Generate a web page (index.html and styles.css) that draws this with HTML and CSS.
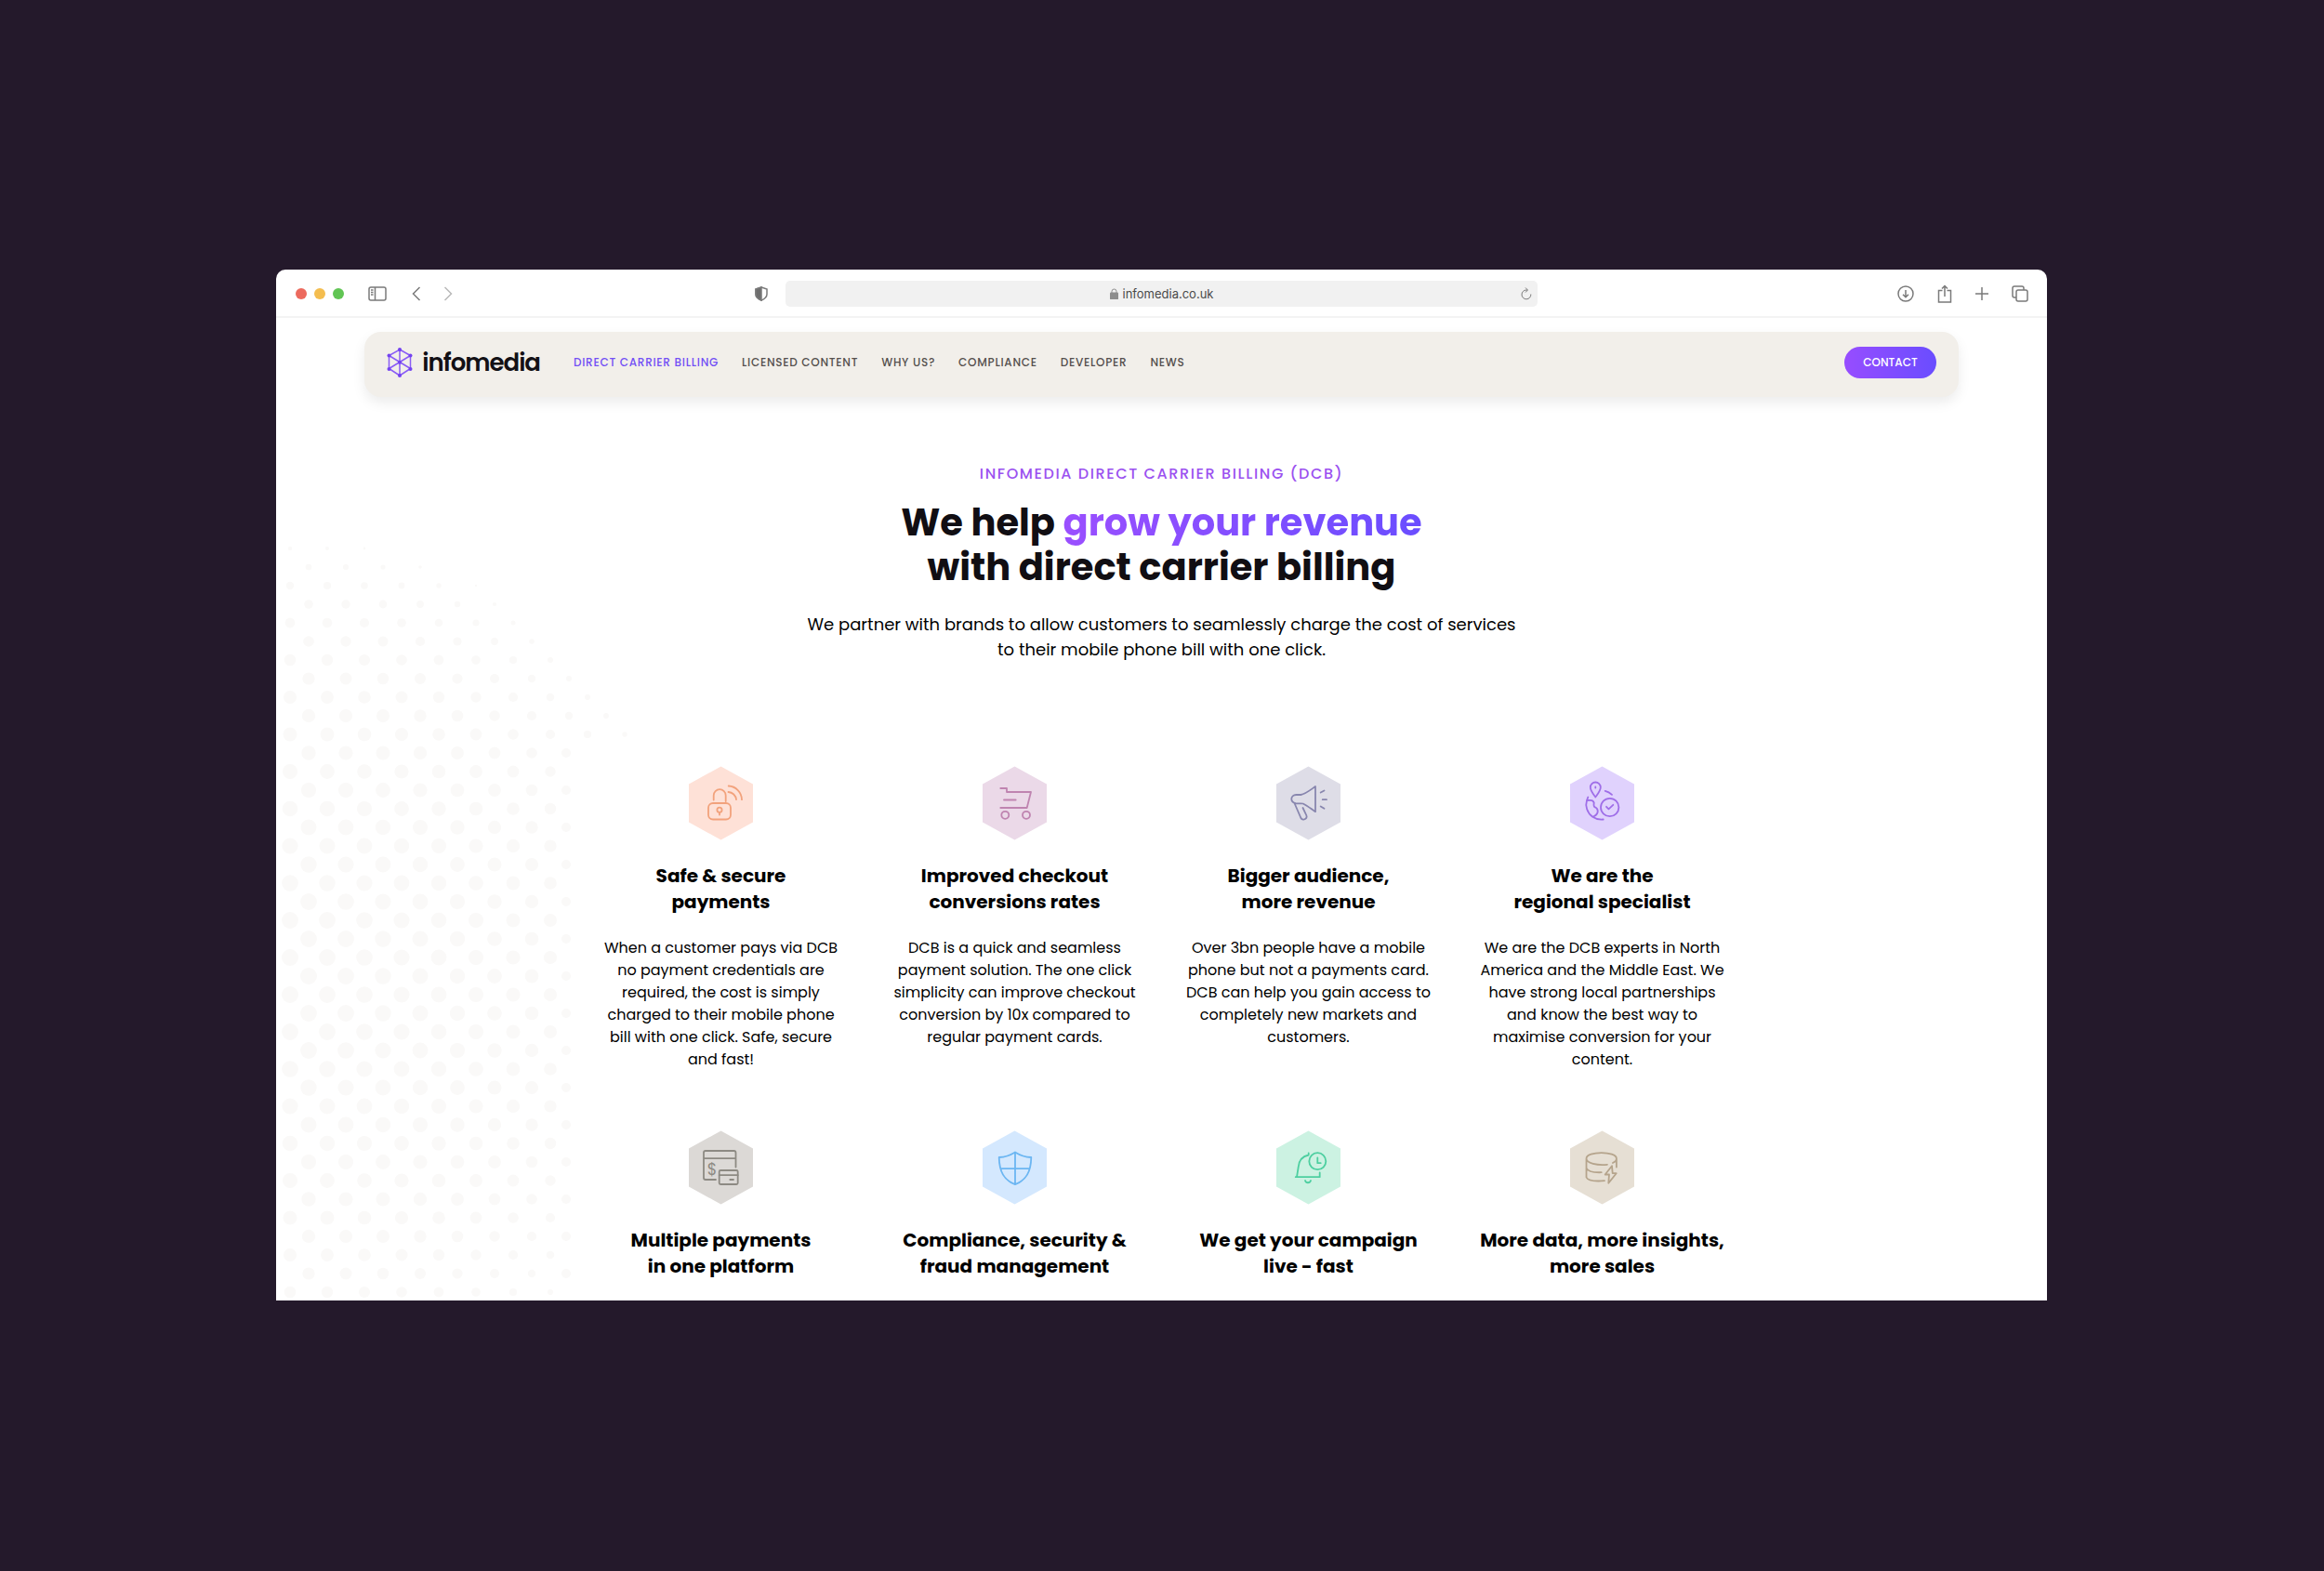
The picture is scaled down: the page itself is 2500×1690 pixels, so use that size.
FILE: index.html
```html
<!DOCTYPE html>
<html lang="en">
<head>
<meta charset="utf-8">
<meta name="viewport" content="width=device-width, initial-scale=1">
<title>Infomedia – Direct Carrier Billing</title>
<link rel="stylesheet" href="styles.css">
</head>
<body>
<div class="window">
  <div class="toolbar">
    <div class="toolbar-side">
      <div class="lights"><span class="light red"></span><span class="light amber"></span><span class="light green"></span></div>
      <button class="tool sidebar" aria-label="Sidebar"><svg width="20" height="16" viewBox="0 0 20 16"><rect x="1" y="1" width="18" height="14" rx="2"/><path d="M7.500 1v14M3 4h2.500M3 6.500h2.500M3 9h2.500"/></svg></button>
      <button class="tool" aria-label="Back"><svg width="10" height="16" viewBox="0 0 10 16"><path d="M8.500 1 1.500 8l7 7"/></svg></button>
      <button class="tool forward" aria-label="Forward"><svg width="10" height="16" viewBox="0 0 10 16"><path d="M1.500 1l7 7-7 7"/></svg></button>
      <button class="tool shield" aria-label="Privacy report"><svg width="14" height="16" viewBox="0 0 14 16"><path d="M7 1 13 3v5.500c0 3-2.500 5-6 6.700-3.500-1.700-6-3.700-6-6.700V3z"/><path class="solid" d="M7 1 1 3v5.500c0 3 2.500 5 6 6.700z"/></svg></button>
    </div>
    <form class="address">
      <svg class="lock" width="9" height="12" viewBox="0 0 9 12"><rect x="0" y="5" width="9" height="7" rx="1"/><path d="M2 6V3.500a2.500 2.500 0 0 1 5 0V6"/></svg>
      <input class="url" type="text" aria-label="Address" value="infomedia.co.uk">
      <button class="tool reload" type="button" aria-label="Reload"><svg width="12" height="14" viewBox="0 0 12 14"><path d="M10.800 7.500A4.900 4.900 0 1 1 6 3h1M5 .500 7.500 3 5 5.500"/></svg></button>
    </form>
    <div class="toolbar-side end">
      <button class="tool" aria-label="Downloads"><svg width="18" height="18" viewBox="0 0 18 18"><circle cx="9" cy="9" r="8"/><path d="M9 5v7.500M6 9.700l3 3 3-3"/></svg></button>
      <button class="tool" aria-label="Share"><svg width="16" height="20" viewBox="0 0 16 20"><path d="M5.500 6.500h-4V19h13V6.500h-4M8 13V1.500M5 4.500l3-3 3 3"/></svg></button>
      <button class="tool" aria-label="New tab"><svg width="14" height="14" viewBox="0 0 14 14"><path d="M7 0v14M0 7h14"/></svg></button>
      <button class="tool" aria-label="Tabs"><svg width="18" height="18" viewBox="0 0 18 18"><rect x="5" y="5" width="12" height="12" rx="2"/><path d="M5 13H3a2 2 0 0 1-2-2V3a2 2 0 0 1 2-2h8a2 2 0 0 1 2 2v2"/></svg></button>
    </div>
  </div>

  <div class="page">
    <svg class="halftone" id="halftone" width="400" height="840" viewBox="0 0 400 840" aria-hidden="true"></svg>

    <header class="site-header">
      <a class="brand" href="#">
        <svg width="28" height="34" viewBox="0 0 28 34"><path d="M14 3 25.500 9.500v14L14 31 2.500 23.500v-14zM14 3v28M2.500 9.500l23 14M25.500 9.500l-23 14"/><g><circle cx="14" cy="3" r="2"/><circle cx="25.500" cy="9.500" r="2"/><circle cx="25.500" cy="24" r="2"/><circle cx="14" cy="31" r="2"/><circle cx="2.500" cy="24" r="2"/><circle cx="2.500" cy="9.500" r="2"/><circle cx="14" cy="16.700" r="2"/></g></svg>
        <span>infomedia</span>
      </a>
      <nav class="nav">
        <a class="active" href="#">DIRECT CARRIER BILLING</a>
        <a href="#">LICENSED CONTENT</a>
        <a href="#">WHY US?</a>
        <a href="#">COMPLIANCE</a>
        <a href="#">DEVELOPER</a>
        <a href="#">NEWS</a>
      </nav>
      <button class="contact">CONTACT</button>
    </header>

    <main>
      <section class="hero">
        <p class="eyebrow">INFOMEDIA DIRECT CARRIER BILLING (DCB)</p>
        <h1>We help <em>grow your revenue</em><br>with direct carrier billing</h1>
        <p class="lead">We partner with brands to allow customers to seamlessly charge the cost of services<br>to their mobile phone bill with one click.</p>
      </section>

      <section class="features">
        <article class="feature orange">
          <svg class="badge" viewBox="0 0 69 79"><path class="hex" d="M34.500 0 69 19v41L34.500 79 0 60V19z"/><rect x="21" y="39.500" width="24" height="17.500" rx="5"/><path d="M26.700 36v-4.800a6.500 6.500 0 0 1 13 0V37.500M42.700 21A15 15 0 0 1 57 35.700M42.500 27.500A9 9 0 0 1 51 35.700M33 49.300V52"/><circle cx="33" cy="46.700" r="2.600"/></svg>
          <h2>Safe &amp; secure<br>payments</h2>
          <p>When a customer pays via DCB<br>no payment credentials are<br>required, the cost is simply<br>charged to their mobile phone<br>bill with one click. Safe, secure<br>and fast!</p>
        </article>
        <article class="feature pink">
          <svg class="badge" viewBox="0 0 69 79"><path class="hex" d="M34.500 0 69 19v41L34.500 79 0 60V19z"/><path d="M19.300 23.500H26v4h26l-4.300 17H19.300M23 36h12.700"/><circle cx="24.300" cy="52.300" r="4"/><circle cx="47" cy="52.300" r="4"/></svg>
          <h2>Improved checkout<br>conversions rates</h2>
          <p>DCB is a quick and seamless<br>payment solution. The one click<br>simplicity can improve checkout<br>conversion by 10x compared to<br>regular payment cards.</p>
        </article>
        <article class="feature slate">
          <svg class="badge" viewBox="0 0 69 79"><path class="hex" d="M34.500 0 69 19v41L34.500 79 0 60V19z"/><path d="M42 21.500v27.200c-4.500-3-8.500-6.500-13.300-8.700-2-.6-5.500.2-8-.3-2.800-.8-4.400-2.600-4.400-4.700 0-2.500 2-4.500 5-4.500h5c5-.8 10.700-5.500 15.700-9zM19.700 40 26 54.500c.7 2 2 3 4 2.500 2.300-.6 3.200-2.500 2.300-4.500L28.500 44.500M47.700 28l3.800-2M49.700 35.700H54M47.700 43l3.800 2.300"/></svg>
          <h2>Bigger audience,<br>more revenue</h2>
          <p>Over 3bn people have a mobile<br>phone but not a payments card.<br>DCB can help you gain access to<br>completely new markets and<br>customers.</p>
        </article>
        <article class="feature violet">
          <svg class="badge" viewBox="0 0 69 79"><path class="hex" d="M34.500 0 69 19v41L34.500 79 0 60V19z"/><path d="M27.300 33c-2.500-3.500-5.500-7-5.500-10.500a5.500 5.500 0 0 1 11 0C32.800 26 29.800 29.500 27.300 33zM27.300 22v1M37.700 26.300c3 .8 5.300 2.200 7.300 4M39 43.300l2.500 2.500 4.800-4.500M19.300 33l-1.300 3.500c-2 6 .3 13.500 6.300 17.800 2.500-1 5-3 5.400-5.300.2-2-.2-3.500-1.700-4.500-2-.8-3-1.200-2.300-5.500-.5-2-2-2.700-4.200-2.700-1.500 0-2.500 0-3.500.2M24.300 54.300C27.500 56.500 31 57.500 35.700 57"/><circle cx="42.700" cy="44" r="9.700"/></svg>
          <h2>We are the<br>regional specialist</h2>
          <p>We are the DCB experts in North<br>America and the Middle East. We<br>have strong local partnerships<br>and know the best way to<br>maximise conversion for your<br>content.</p>
        </article>
        <article class="feature grey">
          <svg class="badge" viewBox="0 0 69 79"><path class="hex" d="M34.500 0 69 19v41L34.500 79 0 60V19z"/><path d="M50.500 39V23.500a2 2 0 0 0-2-2H18a2 2 0 0 0-2 2v27a2 2 0 0 0 2 2h11M16 29.700h34.500M32.700 47.700h20M44.300 52.500H48"/><rect x="32.700" y="42.500" width="20" height="15" rx="1.500"/><text x="25" y="47" text-anchor="middle">$</text></svg>
          <h2>Multiple payments<br>in one platform</h2>
        </article>
        <article class="feature blue">
          <svg class="badge" viewBox="0 0 69 79"><path class="hex" d="M34.500 0 69 19v41L34.500 79 0 60V19z"/><path d="M35 23c-5.500 3.500-11 5.300-17.300 5.500C18 44 23 53 35 57.700 47 53 52 44 52.300 28.500 46 28.300 40.500 26.500 35 23zM35 23v34.700M19.500 40.700h31"/></svg>
          <h2>Compliance, security &amp;<br>fraud management</h2>
        </article>
        <article class="feature mint">
          <svg class="badge" viewBox="0 0 69 79"><path class="hex" d="M34.500 0 69 19v41L34.500 79 0 60V19z"/><circle cx="44.300" cy="32.700" r="9"/><path d="M44.300 29v5.700h3.400M34.700 24v2c-7 1.500-10.500 6-11 13L22 49.700M20.700 49.700h26V45M31 53.500c1 3 5 3 6 0"/></svg>
          <h2>We get your campaign<br>live - fast</h2>
        </article>
        <article class="feature sand">
          <svg class="badge" viewBox="0 0 69 79"><path class="hex" d="M34.500 0 69 19v41L34.500 79 0 60V19z"/><path d="M40 36.300c-11 1-22.500-1.300-22.500-6.500C17.500 21.500 49.900 21.500 49.900 29.800c0 2-1.500 3.700-4 4.700M17.500 29.800V50c1.500 3.500 9.500 4.500 19.500 3.700M49.900 29.800V39M17.500 40c1.500 3.500 8 5 16.200 4.700M45 37.700 37.700 47H42l-.7 9.300 8.400-10.600h-4z"/></svg>
          <h2>More data, more insights,<br>more sales</h2>
        </article>
      </section>
    </main>
  </div>
</div>
<script src="dots.js"></script>
</body>
</html>
```

FILE: styles.css
```css
* {
  box-sizing: border-box;
}

body {
  margin: 0;
  min-height: 100vh;
  padding: 290px 298px 290px 297px;
  background: #24192b;
  color: #000;
  font-family: Poppins, Inter, "Noto Sans", sans-serif;
}

h1, h2, p {
  margin: 0;
}

button {
  padding: 0;
  border: 0;
  background: none;
  font: inherit;
}

a {
  color: inherit;
  text-decoration: none;
}

.window {
  border-radius: 10px 10px 0 0;
  background: #fff;
  overflow: hidden;
}

/* Browser toolbar */
.toolbar {
  display: grid;
  grid-template-columns: 1fr 42.5% 1fr;
  align-items: center;
  height: 52px;
  padding-top: 2px;
  border-bottom: 2px solid #f3f3f3;
}

.toolbar-side {
  display: flex;
  align-items: center;
  padding: 0 19px 0 21px;
  gap: 24px;
}

.toolbar-side.end {
  justify-content: flex-end;
  padding-right: 20px;
  gap: 25px;
}

.lights {
  display: flex;
  gap: 8px;
  margin-right: 2px;
}

.light {
  width: 12px;
  height: 12px;
  border-radius: 50%;
}

.red { background: #ec6a5e; }
.amber { background: #f4bd4f; }
.green { background: #61c554; }

.tool {
  display: flex;
}

.tool svg {
  fill: none;
  stroke: #7a7a7a;
  stroke-width: 1.5;
}

.tool .solid {
  fill: #6e6e6e;
}

.sidebar {
  margin-right: 3px;
}

.forward svg {
  stroke: #b9b9b9;
}

.shield {
  margin-left: auto;
}

.address {
  position: relative;
  display: flex;
  align-items: center;
  justify-content: center;
  gap: 5px;
  height: 28px;
  border-radius: 5px;
  background: #f1f1f1;
}

.lock {
  fill: #8e8e8e;
  stroke: #8e8e8e;
}

.lock path {
  fill: none;
}

.url {
  width: 98px;
  padding: 0;
  border: 0;
  background: none;
  color: #4a4a4a;
  font: 13px Inter, sans-serif;
}

.reload {
  position: absolute;
  right: 6px;
}

.reload svg {
  stroke: #7a7a7a;
  stroke-width: 1;
}

/* Site */
.page {
  position: relative;
  padding-top: 15px;
}

.halftone {
  position: absolute;
  left: 0;
  top: 218px;
  fill: #faf9f8;
}

.site-header {
  position: relative;
  display: flex;
  align-items: flex-start;
  margin: 0 5%;
  padding: 16px 24px 20px;
  border-radius: 18px;
  background: #f2efea;
  box-shadow: 0 6px 14px rgba(0, 0, 0, 0.08);
}

.brand {
  display: flex;
  align-items: center;
  gap: 10px;
  height: 34px;
  margin-right: 36px;
  color: #131015;
  font-size: 26px;
  font-weight: 600;
  letter-spacing: -1px;
}

.brand svg {
  fill: none;
  stroke: #8a5cf6;
  stroke-width: 1.5;
}

.brand g {
  fill: #7443f0;
  stroke: none;
}

.nav {
  display: flex;
  gap: 25px;
  color: #55504e;
  font-size: 12px;
  font-weight: 500;
  line-height: 34px;
  letter-spacing: 0.06em;
}

.active {
  color: #7350f5;
}

.contact {
  height: 34px;
  margin-left: auto;
  padding: 0 20px;
  border-radius: 17px;
  background: linear-gradient(90deg, #974dff, #6a4dff);
  color: #fff;
  font-size: 12px;
  font-weight: 500;
}

.hero {
  position: relative;
  padding: 71px 0 112px;
  text-align: center;
}

.eyebrow {
  color: #9b51f0;
  font-size: 16px;
  font-weight: 500;
  line-height: 24px;
  letter-spacing: 0.1em;
}

h1 {
  margin: 16px 0 24px;
  color: #110e13;
  font-size: 40px;
  font-weight: 700;
  line-height: 48px;
}

h1 em {
  background: linear-gradient(90deg, #9a4fff, #6a4dff);
  background-clip: text;
  color: transparent;
  font-style: normal;
}

.lead {
  font-size: 18px;
  line-height: 27px;
}

.features {
  position: relative;
  display: grid;
  grid-template-columns: repeat(4, 1fr);
  row-gap: 64px;
  max-width: 1264px;
  margin: 0 auto;
  padding-bottom: 23px;
  text-align: center;
}

.badge {
  display: block;
  width: 69px;
  height: 80px;
  margin: 0 auto 24px;
  fill: none;
  stroke: var(--ink);
  stroke-width: 1.8;
  stroke-linecap: round;
  stroke-linejoin: round;
}

.badge .hex {
  fill: var(--tint);
  stroke: none;
}

.badge text {
  fill: var(--ink);
  stroke: none;
  font-size: 17px;
}

.orange { --tint: #fee1d7; --ink: #f2a27c; }
.pink { --tint: #ebd9e8; --ink: #bf84b0; }
.slate { --tint: #dedde7; --ink: #8886ae; }
.violet { --tint: #e0d2fd; --ink: #9f6ee8; }
.grey { --tint: #dcd9d6; --ink: #8d8a83; }
.blue { --tint: #d4e8fe; --ink: #6cb6f2; }
.mint { --tint: #ccf2e2; --ink: #4dcfa0; }
.sand { --tint: #e6dfd4; --ink: #b5a48c; }

h2 {
  font-size: 20px;
  font-weight: 700;
  line-height: 28px;
}

.feature p {
  margin-top: 24px;
  font-size: 16px;
  line-height: 24px;
}
```

FILE: dots.js
```js
// Halftone dots: a staggered 20px lattice whose dots shrink away from a centre point.
const svg = document.getElementById("halftone");
const centre = { x: 3, y: 490 };
const reach = 475;

for (let row = 0; row < 42; row++) {
  const y = 10 + row * 20;
  for (let x = row % 2 ? 15 : 35; x < 400; x += 40) {
    const d = Math.hypot(x - centre.x, y - centre.y) / reach;
    if (d >= 1 || (y > 240 && x > 320)) continue;
    const dot = document.createElementNS("http://www.w3.org/2000/svg", "circle");
    dot.setAttribute("cx", y > 240 && x > 310 ? x - 3 : x);
    dot.setAttribute("cy", y);
    dot.setAttribute("r", (y > 240 && x > 310 ? 5 : 9 * Math.sqrt(1 - d * d)).toFixed(1));
    svg.appendChild(dot);
  }
}
```
